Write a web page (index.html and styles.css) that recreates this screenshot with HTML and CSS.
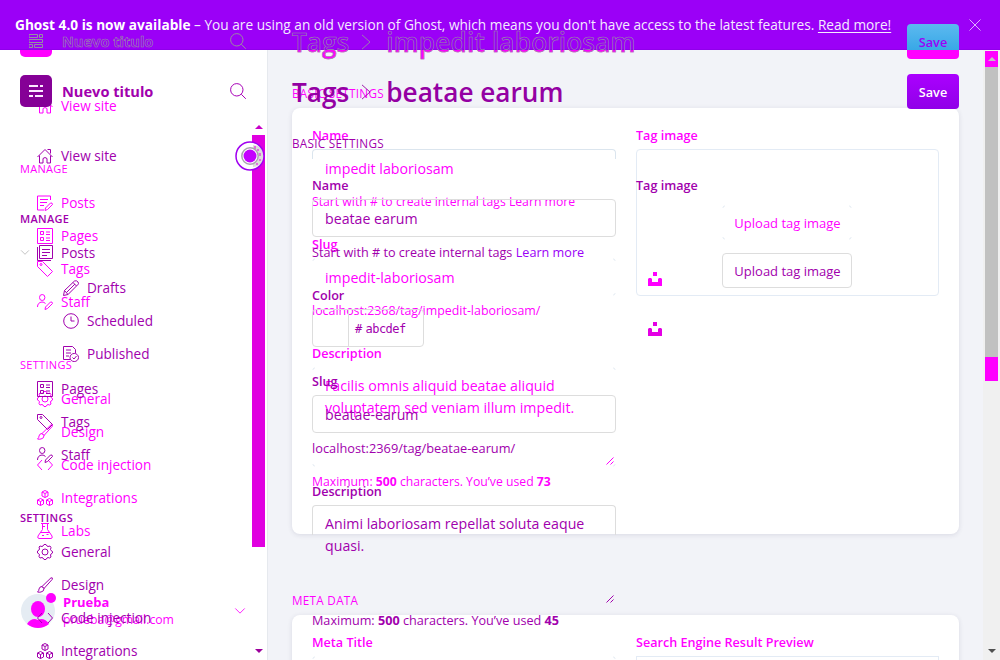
FILE: index.html
```html
<!DOCTYPE html>
<html lang="en">
<head>
<meta charset="utf-8">
<title>Tags</title>
<link rel="stylesheet" href="styles.css">
</head>
<body>
<svg class="defs" aria-hidden="true">
  <symbol id="home" viewBox="0 0 16 16"><path d="M.5 9 8 1.500 15.500 9M2.500 7.500v7.500h3.500v-4.500q2-2 4 0v4.500h3.500V7.500M10.500 1.500h3v4"/></symbol>
  <symbol id="posts" viewBox="0 0 16 16"><path d="M13.500 5V1H.5v14H7M3 4.500h8M3 7.500h7M3 10.500h4M8 15.500l.5-2.500 5-5q2-.5 2 1.500l-5 5z"/></symbol>
  <symbol id="stack" viewBox="0 0 16 16"><path d="M2.500.5h13v13h-13zM.5 2v13.500H14M5 4.500h8M5 7.500h8M5 10.500h5"/></symbol>
  <symbol id="pages" viewBox="0 0 16 16"><path d="M.5.5h15v15H.5zM3.500 3.500h3v3h-3zM3.500 9.500h3v3h-3zM9 4h4M9 6.500h4M9 10h4M9 12.500h4"/></symbol>
  <symbol id="tag" viewBox="0 0 16 16"><path d="M.5.500h5l10 10-5 5-10-10zM3 3.500a1 1 0 1 0 2 0 1 1 0 1 0-2 0z"/></symbol>
  <symbol id="staff" viewBox="0 0 16 16"><path d="M2.500 3.500a2.700 3 0 1 0 5.400 0 2.700 3 0 1 0-5.400 0zM.5 13q0-4.500 4.500-5 2 0 3.500 1.500M8 15.500l.5-2.500 5-5q2-.5 2 1.500l-5 5z"/></symbol>
  <symbol id="gear" viewBox="0 0 16 16"><path d="m6 2 1-1.500h2L10 2l1 .5 2-.5 1 1.500-.5 2 .5 1 1.500 1v1.500L14 10l-.5 1 .5 2-1.500 1-1.500-.5-1 .5-1 1.500H7L6 14l-1-.5-2 .5-1-1.500.5-2L2 10 .5 9V7L2 6l.5-1L2 3l1-1 2 .5zM5 8a3 3 0 1 0 6 0 3 3 0 1 0-6 0z"/></symbol>
  <symbol id="brush" viewBox="0 0 16 16"><path d="M5 9.500 14 .8q2-.5 1.300 1.500L7 11.500zM5 9.500l2 2q0 3-3 3.500-2 .5-3.500 0Q2 14 2 12q.5-2.500 3-2.500z"/></symbol>
  <symbol id="code" viewBox="0 0 16 16"><path d="M5 3 .5 8 5 13M11 3l4.500 5-4.500 5"/></symbol>
  <symbol id="cubes" viewBox="0 0 16 16"><path d="m8 .5 3 1.500v4L8 7.500 5 6V2zM5 2l3 1.500L11 2M8 3.500v4M3.500 8.500l3 1.500v4l-3 1.500-3-1.500v-4zM.5 10l3 1.500 3-1.500M3.500 11.500v4M12.500 8.500l3 1.500v4l-3 1.500-3-1.500v-4zM9.500 10l3 1.500 3-1.500M12.500 11.500v4"/></symbol>
  <symbol id="flask" viewBox="0 0 16 16"><path d="M4 .5h8M5.500.5v6L1 13q-.8 2.500 1 2.500h12q1.800 0 1-2.500l-4.500-6.500v-6M3.500 9.500h9M5.500 3.500H8M5 12.500h2M9.500 11.500h2"/></symbol>
  <symbol id="pencil" viewBox="0 0 16 16"><path d="m.5 15.500 1-5L11.500 1q2-1 3.500 1t-.5 3L5 14.500zM1.500 10.500 5 14.500M10 2.500 13.500 6M3.500 12.500 12 4"/></symbol>
  <symbol id="clock" viewBox="0 0 16 16"><circle cx="8" cy="8" r="7.300"/><path d="M8 3.500V8h3.500"/></symbol>
  <symbol id="published" viewBox="0 0 16 16"><path d="M7 13.500H.5V.5h9l3 3V7M3 4h5M3 7h5M3 10h3M7 11.500a4.200 4 0 1 0 8.500 0 4.200 4 0 1 0-8.500 0zM9.500 11.500l1.500 1.500 2.500-3"/></symbol>
  <symbol id="search" viewBox="0 0 16 16"><circle cx="6.800" cy="6.800" r="6.200"/><path d="m11.300 11.300 4.500 4.500"/></symbol>
  <symbol id="right" viewBox="0 0 10 18"><path d="m.5 1 9 8-9 8"/></symbol>
  <symbol id="down" viewBox="0 0 12 7"><path d="m.5.5 5.500 5.500L11.500.5"/></symbol>
  <symbol id="close" viewBox="0 0 12 12"><path d="m.5.5 11 11M11.500.5.5 11.500"/></symbol>
  <symbol id="grip" viewBox="0 0 8 8"><path d="M.5 7.500 7.500.5M4.500 7.500l3-3"/></symbol>
  <symbol id="unsplash" viewBox="0 0 14 14"><path class="solid" d="M5 0h4v4H5zM0 7l1-1h2l1 1v3h6V7l1-1h2l1 1v7H0z"/></symbol>
  <symbol id="mark" viewBox="0 0 14 14"><path class="solid" d="M0 1h9v2H0zM11 1h3v2h-3zM0 6h14v2H0zM0 11h4v2H0zM6 11h8v2H6z"/></symbol>
  <symbol id="mark-line" viewBox="0 0 14 14"><path d="M0 .5h8.500v3H0zM10.500.5h3v3h-3zM0 5.500h13.500v3H0zM0 10.500h3.500v3H0zM5.500 10.500h8v3h-8z"/></symbol>
</svg>

<div class="page">
  <div class="banner">
    <p><strong>Ghost 4.0 is now available</strong> <span>– You are using an old version of Ghost, which means you don't have access to the latest features. <a>Read more!</a></span></p>
    <svg class="close"><use href="#close"/></svg>
  </div>

  <div class="state prev">
    <aside class="sidebar">
      <header class="brand"><span class="logo"><svg><use href="#mark-line"/></svg></span><b>Nuevo titulo</b><svg class="i"><use href="#search"/></svg></header>
      <nav>
        <a class="site"><svg class="i"><use href="#home"/></svg>View site</a>
        <h4>MANAGE</h4>
        <a><svg class="i"><use href="#posts"/></svg>Posts</a>
        <a><svg class="i"><use href="#pages"/></svg>Pages</a>
        <a><svg class="i"><use href="#tag"/></svg>Tags</a>
        <a><svg class="i"><use href="#staff"/></svg>Staff</a>
        <h4>SETTINGS</h4>
        <a><svg class="i"><use href="#gear"/></svg>General</a>
        <a><svg class="i"><use href="#brush"/></svg>Design</a>
        <a><svg class="i"><use href="#code"/></svg>Code injection</a>
        <a><svg class="i"><use href="#cubes"/></svg>Integrations</a>
        <a><svg class="i"><use href="#flask"/></svg>Labs</a>
      </nav>
      <footer class="user">
        <span class="avatar"><svg viewBox="0 0 34 34"><circle cx="17" cy="17" r="17" fill="#e5ecf3"/><ellipse cx="17" cy="15" rx="7" ry="8"/><path d="M6 30q3-5 8-5l3 1 3-1q5 0 8 5-5 4-11 4T6 30z"/></svg><i></i></span>
        <span class="who"><b>Prueba</b><small>prueba@gmail.com</small></span>
        <svg class="chev"><use href="#down"/></svg>
      </footer>
    </aside>
    <main>
      <header class="head"><h1><span>Tags</span><svg><use href="#right"/></svg><span class="name">impedit laboriosam</span></h1><button>Save</button></header>
      <h3>BASIC SETTINGS</h3>
      <section class="card basic">
        <div class="col">
          <label>Name</label><div class="input open">impedit laboriosam</div><p class="hint narrow">Start with # to create internal tags Learn more</p>
          <label>Slug</label><div class="input corners">impedit-laboriosam</div><p class="hint narrow url">localhost:2368/tag/impedit-laboriosam/</p>
          <label>Description</label><div class="input area corners">Facilis omnis aliquid beatae aliquid<br>voluptatem sed veniam illum impedit.<svg class="grip"><use href="#grip"/></svg></div><p class="hint narrow">Maximum: <b>500</b> characters. You’ve used <b>73</b></p>
        </div>
        <div class="col">
          <label>Tag image</label>
          <div class="drop boxed"><span class="upload corners">Upload tag image</span><svg class="un"><use href="#unsplash"/></svg></div>
        </div>
      </section>
      <h3 class="meta">META DATA</h3>
      <section class="card">
        <div class="col"><label>Meta Title</label><div class="input corners"></div></div>
        <div class="col"><label>Search Engine Result Preview</label><div class="preview"></div></div>
      </section>
    </main>
  </div>

  <div class="nav-scroll"><i class="up"></i><i class="thumb"></i><i class="dn"></i></div>

  <div class="state cur">
    <aside class="sidebar">
      <header class="brand"><span class="logo"><svg><use href="#mark"/></svg></span><b>Nuevo titulo</b><svg class="i"><use href="#search"/></svg></header>
      <nav>
        <a class="site"><svg class="i"><use href="#home"/></svg>View site</a>
        <h4>MANAGE</h4>
        <a class="parent"><svg class="tog"><use href="#down"/></svg><svg class="i"><use href="#stack"/></svg>Posts</a>
        <div class="sub">
          <a><svg class="i"><use href="#pencil"/></svg>Drafts</a>
          <a><svg class="i"><use href="#clock"/></svg>Scheduled</a>
          <a><svg class="i"><use href="#published"/></svg>Published</a>
        </div>
        <a><svg class="i"><use href="#pages"/></svg>Pages</a>
        <a><svg class="i"><use href="#tag"/></svg>Tags</a>
        <a><svg class="i"><use href="#staff"/></svg>Staff</a>
        <h4>SETTINGS</h4>
        <a><svg class="i"><use href="#gear"/></svg>General</a>
        <a><svg class="i"><use href="#brush"/></svg>Design</a>
        <a><svg class="i"><use href="#code"/></svg>Code injection</a>
        <a><svg class="i"><use href="#cubes"/></svg>Integrations</a>
      </nav>
    </aside>
    <main>
      <header class="head"><h1><span>Tags</span><svg><use href="#right"/></svg><span class="name">beatae earum</span></h1><button>Save</button></header>
      <h3>BASIC SETTINGS</h3>
      <section class="card">
        <div class="col">
          <label>Name</label><div class="input">beatae earum</div><p class="hint">Start with # to create internal tags <a>Learn more</a></p>
          <label>Color</label><div class="color"><span></span><code># abcdef</code></div>
          <label class="tight">Slug</label><div class="input">beatae-earum</div><p class="hint url">localhost:2369/tag/beatae-earum/</p>
          <label>Description</label><div class="input area cut">Animi laboriosam repellat soluta eaque<br>quasi.<svg class="grip"><use href="#grip"/></svg></div><p class="hint">Maximum: <b>500</b> characters. You’ve used <b>45</b></p>
        </div>
        <div class="col">
          <label>Tag image</label>
          <div class="drop"><span class="upload">Upload tag image</span><svg class="un"><use href="#unsplash"/></svg></div>
        </div>
      </section>
    </main>
  </div>

  <svg class="beacon" viewBox="0 0 30 30"><circle cx="15" cy="15" r="14" fill="#fff"/><path d="M18 4a11 11 0 0 1 0 22z" fill="#ddd"/><path d="M20 5v3M23 8v2M25 12v3M25 18v2M22 22v2" stroke="#e000e0"/><circle cx="15" cy="15" r="14" fill="none" stroke="#a000f0" stroke-width="1.500"/><circle cx="15" cy="15" r="8.200" fill="#fff" stroke="#aaa6b0" stroke-width="1.500"/><circle cx="15" cy="15" r="6.500" fill="#c400ff"/></svg>

  <div class="page-scroll"><i class="top"></i><i class="mid"></i><i class="end"></i><i class="dn"></i></div>
</div>
</body>
</html>
```
FILE: styles.css
```css
* { box-sizing: border-box; margin: 0; padding: 0; }
body { font: 13px/18px "Open Sans", "Noto Sans", sans-serif; }
svg { display: block; fill: none; stroke: currentColor; stroke-width: 1; flex: none; overflow: visible; }
.solid { fill: currentColor; stroke: none; }
.defs { position: absolute; width: 0; height: 0; }
.page { position: relative; width: 1000px; height: 660px; overflow: hidden; background: linear-gradient(90deg, #fff 267px, #e6e9ee 267px 268px, #f2f3f8 268px); }

.banner { height: 50px; display: flex; align-items: center; justify-content: space-between; padding: 0 19px 0 15px; background: #9b00f7; color: #f4ebff; font-size: 13.660px; white-space: nowrap; border-bottom: 1px solid #8f00ea; }
.banner p { padding-top: 1px; }
.banner strong { color: #fff; font-weight: 700; }
.banner a { text-decoration: underline; text-underline-offset: 2px; }
.close { width: 12px; height: 12px; color: #dcb0ff; }

.state { position: absolute; inset: 0; display: grid; grid-template-columns: 268px 715px; align-items: start; }
.prev { color: #f0f; }
.cur { color: #a100ad; padding-top: 50px; }

.sidebar { display: flex; flex-direction: column; height: 660px; }
.brand { display: flex; align-items: center; height: 57px; padding: 25px 22px 0 20px; }
.brand b { flex: 1; margin: 0 0 1px 10px; font-size: 14.600px; line-height: 18px; font-weight: 700; }
.logo { display: grid; place-items: center; width: 32px; height: 32px; border-radius: 5px; background: #850096; color: #fbe8ff; }
.logo svg { width: 14px; height: 14px; }
.i { width: 16px; height: 16px; }
.prev .brand { color: #9a8aa0; }
.prev .brand b { color: transparent; -webkit-text-stroke: .6px #998fa3; }
.prev .logo { background: linear-gradient(transparent 25px, #f0f 25px); color: #96909f; }
.cur .brand .i { color: #a800b8; }
nav a { display: flex; align-items: center; height: 33px; padding: 0 0 2px 37px; font-size: 13.600px; }
nav a .i { margin-right: 8px; }
nav .site { margin-top: 33px; }
nav h4 { margin: 38px 0 10px 20px; font-size: 11px; line-height: 16px; font-weight: 600; letter-spacing: .3px; }
.prev nav h4 { font-weight: 500; }
nav .parent { padding-left: 20px; }
.tog { width: 10px; height: 5px; margin-right: 7px; color: #aaa; }
.sub { margin: 2px 0; }
.sub a { padding-left: 63px; }
.user { display: flex; align-items: center; margin: auto 0 32px; height: 34px; padding: 0 22px 0 21px; }
.avatar { position: relative; width: 34px; height: 34px; }
.avatar svg { fill: #f0f; stroke: none; width: 34px; height: 34px; }
.avatar i { position: absolute; left: 25px; top: -1px; width: 10px; height: 10px; border-radius: 50%; background: #f0f; }
.who { flex: 1; display: grid; margin-left: 8px; line-height: 17px; }
.who b { font-size: 13px; }
.who small { font-size: 12.250px; }
.chev { width: 12px; height: 6px; }

main { padding-left: 24px; width: 691px; }
.head { display: flex; align-items: center; justify-content: space-between; height: 59px; padding-top: 24px; }
h1 { display: flex; align-items: center; font-size: 26.200px; line-height: 36px; font-weight: 600; white-space: nowrap; color: #9400a3; }
h1 svg { width: 10px; height: 16px; margin: 0 15px 0 12px; }
.prev h1 { color: #998fa3; }
.prev h1 span { color: transparent; -webkit-text-stroke: .6px #998fa3; background: linear-gradient(transparent 26px, #f0f 26px) text; -webkit-background-clip: text; }
.prev h1 .name { letter-spacing: .15px; }
button { width: 52px; height: 35px; border: 0; border-radius: 4px; background: linear-gradient(#ab00ff, #9000e8); color: #fff; font: 600 12.700px "Open Sans", sans-serif; }
.prev button { background: linear-gradient(#5cb9f0, #38a8e6 26px, #f0f 26px); color: #9b00f7; }
h3 { margin: 26px 0 7px; font-size: 11.700px; line-height: 16px; font-weight: 400; letter-spacing: .3px; }
h3.meta { margin: 58px 0 7px; }
.card { display: grid; grid-template-columns: 304px 303px; gap: 20px; padding: 19px 20px 0; align-items: start; border-radius: 8px; }
.prev .card { height: 426px; background: #fff; box-shadow: 0 1px 5px rgba(40, 40, 80, .12); }
.col { display: flex; flex-direction: column; }
label { font-weight: 600; font-size: 12.600px; }
.input { position: relative; height: 38px; margin-top: 4px; padding: 8px 12px; border: 1px solid #ddd; border-radius: 4px; font-size: 14.200px; line-height: 21px; white-space: nowrap; }
.area { height: 100px; line-height: 22px; padding-top: 7px; }
.prev .area { padding-top: 7px; }
.open, .corners, .cut { border-color: transparent; }
.open::before, .corners::before, .cut::before { content: ""; position: absolute; inset: -1px; border: 1px solid #dbe5ee; border-radius: 4px; }
.open::before { bottom: auto; height: 9px; border-bottom: 0; border-radius: 4px 4px 0 0; }
.cut::before { bottom: auto; height: 29px; border-color: #ddd; border-bottom: 0; border-radius: 4px 4px 0 0; }
.corners::before { border-color: #e3eaf1; -webkit-mask: linear-gradient(#000 0 0) 0 0/3px 3px, linear-gradient(#000 0 0) 100% 0/3px 3px, linear-gradient(#000 0 0) 0 100%/3px 3px, linear-gradient(#000 0 0) 100% 100%/3px 3px; -webkit-mask-repeat: no-repeat; }
.grip { position: absolute; right: 1px; bottom: 1px; width: 8px; height: 8px; }
.hint { margin-top: 6px; margin-bottom: -1px; font-size: 12.650px; white-space: nowrap; }
.hint + label { margin-top: 27px; }
.prev .hint + label { margin-top: 26px; }
.prev .url { margin: 6px 0 -1px; font-size: 12.400px; }
.cur .url { font-size: 12.800px; }
label.tight { margin-top: 26px; }
.hint a { color: #9b00f7; }
.narrow { font-size: 12.220px; }
.color { display: flex; width: 112px; height: 38px; margin-top: 4px; border: 1px solid #ddd; border-radius: 4px; }
.color span { width: 36px; border-right: 1px solid #ddd; }
code { padding: 11px 6px; font: 12px/17px "DejaVu Sans Mono", monospace; letter-spacing: -.5px; word-spacing: -3px; }
.drop { display: flex; flex-direction: column; align-items: center; height: 147px; margin-top: 4px; padding: 53px 12px 0 11px; border: 1px solid transparent; }
.boxed { border-color: #e3ebf5; border-radius: 4px; }
.upload { position: relative; display: grid; place-items: center; width: 130px; height: 35px; padding-left: 1px; border: 1px solid #ddd; border-radius: 4px; font-size: 13px; }
.prev .upload { border-color: transparent; margin-top: 2px; }
.un { width: 14px; height: 14px; align-self: flex-start; margin-top: 34px; color: #e400e4; }
.prev .un { margin-top: 32px; color: #f0f; }
.preview { height: 38px; margin-top: 4px; border: 1px solid #e3ebf5; }

.nav-scroll { position: absolute; left: 252px; top: 125px; width: 13px; height: 530px; display: flex; flex-direction: column; align-items: center; color: #c800c8; }
.nav-scroll .thumb { width: 13px; height: 412px; margin: 6px 0 102px; background: #e000e0; }
.up { border: 4px solid transparent; border-top: 0; border-bottom-color: currentColor; }
.dn { border: 4px solid transparent; border-bottom: 0; border-top-color: currentColor; }
.nav-scroll .dn { color: #9c009c; }
.beacon { position: absolute; left: 235px; top: 141px; width: 30px; height: 30px; stroke: none; }
.page-scroll { position: absolute; right: 0; top: 50px; width: 17px; height: 610px; padding-top: 1px; display: flex; flex-direction: column; align-items: center; background: #f0f0f0; color: #505050; }
.page-scroll .top, .page-scroll .end { width: 13px; height: 16px; background: #f0f; }
.page-scroll .top { display: grid; place-items: center; }
.page-scroll .top::before { content: ""; border: 4px solid transparent; border-top: 0; border-bottom-color: #c1c1c1; }
.page-scroll .mid { width: 13px; height: 290px; background: #c1c1c1; }
.page-scroll .end { height: 24px; }
.page-scroll .dn { margin-top: 268px; }
```
